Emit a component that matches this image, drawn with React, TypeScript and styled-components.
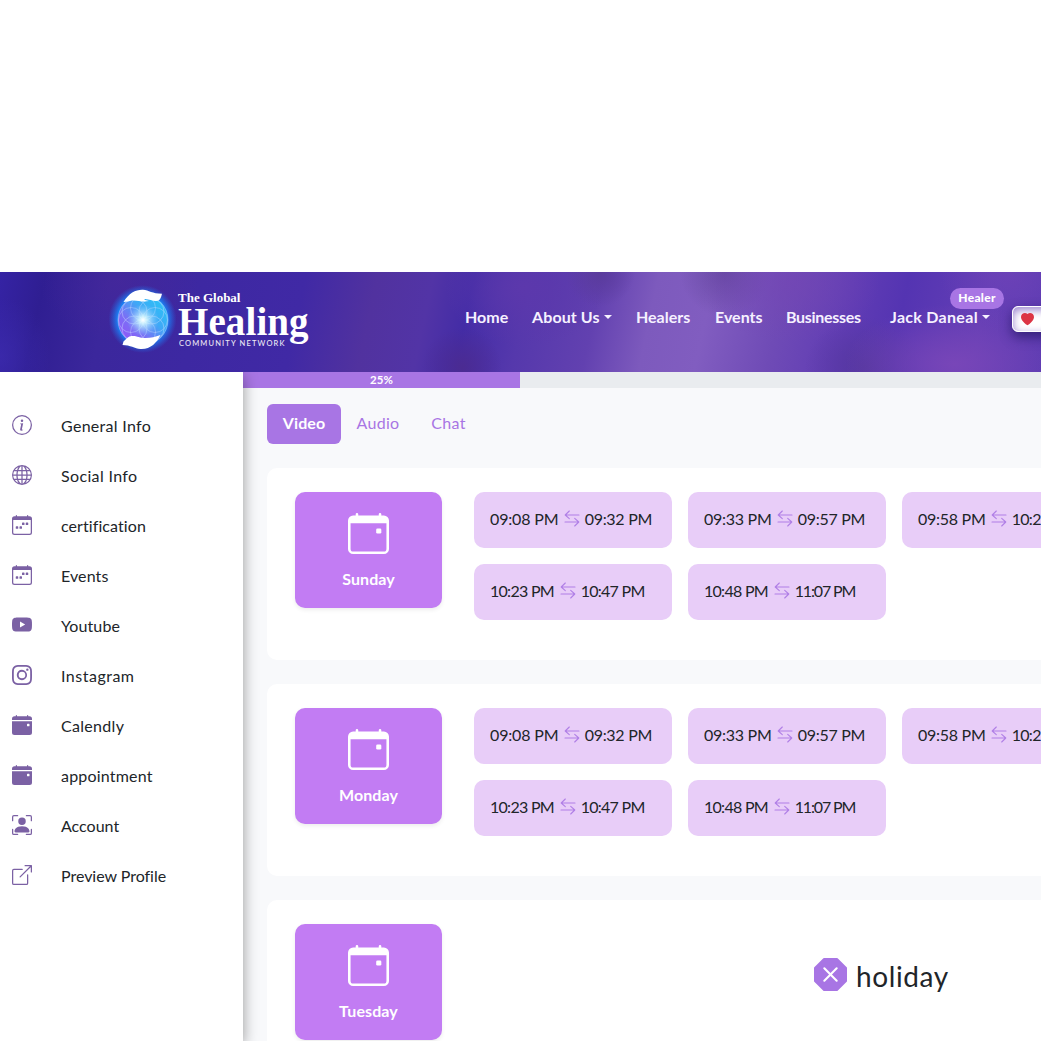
import React from "react";
import styled, { createGlobalStyle } from "styled-components";
import {
  BsInfoCircle, BsGlobe, BsCalendarWeek, BsYoutube, BsInstagram, BsCalendarEventFill,
  BsPersonBoundingBox, BsBoxArrowUpRight, BsCalendarEvent, BsXOctagonFill, BsHeartFill,
} from "react-icons/bs";

const Global = createGlobalStyle`
  *{box-sizing:border-box}
  body{margin:0;background:#fff;color:#212529;font:16px/24px Lato,"Liberation Sans",sans-serif;overflow:hidden}
`;
const Page = styled.div`height:1041px;overflow:hidden;padding-top:272px;display:flex;flex-direction:column;`;
const Header = styled.header`
  height:100px;flex:none;display:flex;align-items:flex-start;overflow:hidden;
  background:
    radial-gradient(ellipse 50px 60px at 0 85%,#3d2cb0aa,transparent),
    radial-gradient(ellipse 80px 60px at 120px 10px,#4a289a88,transparent),
    radial-gradient(ellipse 90px 60px at 790px 10px,#7446b4aa,transparent),
    radial-gradient(ellipse 110px 60px at 955px 92px,#7846b8,transparent),
    radial-gradient(ellipse 70px 60px at 1010px 0,#7043b8aa,transparent),
    radial-gradient(ellipse 45px 45px at 725px 0,#62449ccc,transparent),
    radial-gradient(ellipse 35px 35px at 600px 0,#5a3b9c,transparent),
    radial-gradient(ellipse 40px 40px at 462px 95px,#4b2b92,transparent),
    radial-gradient(ellipse 60px 50px at 865px 95px,#55379f,transparent),
    radial-gradient(ellipse 80px 60px at 525px 15px,#5c38ac,transparent),
    linear-gradient(102deg,#3523a4 0,#2f1e92 45px,#3b279c 110px,#3d28a2 200px,#4029a5 300px,#51329f 370px,#5234a6 425px,#432ca6 465px,#5538ac 520px,#6241b0 590px,#7d5abd 645px,#815dc0 700px,#6f4bb6 770px,#603cb4 840px,#5434b2 890px,#633eb5 970px,#5b3bb2 1041px);
`;
const Logo = styled.div`display:flex;margin:8px 0 0 105px;width:210px;height:80px;flex:none;`;
const Emblem = styled.svg`width:75px;height:75px;flex:none;`;
const LogoText = styled.div`display:flex;flex-direction:column;color:#fff;margin:10px 0 0 -2px;white-space:nowrap;font-family:"Liberation Serif",serif;font-weight:700;`;
const LogoTop = styled.span`font-size:13px;line-height:15px;`;
const LogoMain = styled.span`font-size:39px;line-height:34px;letter-spacing:.1px;`;
const LogoSub = styled.span`font:500 7.5px/10px Lato,sans-serif;letter-spacing:1.15px;padding-left:1px;opacity:.9;`;
const Nav = styled.nav`display:flex;margin:34px 0 0 150px;color:#f6f1ff;font-weight:700;white-space:nowrap;`;
const NavItem = styled.span<{ $w: number; $s?: number }>`width:${p => p.$w}px;height:24px;padding-bottom:2px;flex:none;display:flex;align-items:center;letter-spacing:${p => p.$s ?? 0}px;position:relative;`;
const Caret = styled.i`border:4.5px solid transparent;border-top-color:currentColor;border-bottom:0;margin-left:4px;`;
const Badge = styled.b`position:absolute;left:60px;top:-18px;width:54px;height:21px;border-radius:11px;background:#a875e4;color:#fff;font-size:12px;line-height:20px;text-align:center;letter-spacing:.3px;`;
const HeartButton = styled.div`width:60px;height:26px;flex:none;border:1px solid #fff;border-radius:6px;background:#fff;box-shadow:inset 0 3px 9px #9a83cf,0 5px 12px #2b1a6acc;color:#dc3545;padding:6px 8px;display:flex;svg{width:13px;height:13px;}`;
const Body = styled.div`display:flex;flex:1;min-height:0;`;
const Side = styled.aside`width:243px;flex:none;padding-top:28px;background:#fff;box-shadow:0 4px 14px #0006;position:relative;clip-path:inset(0 -30px 0 0);`;
const SideItem = styled.div<{ $s: number }>`height:50px;display:flex;align-items:center;padding-left:12px;letter-spacing:${p => p.$s}px;color:#212529;svg{width:20px;height:20px;margin-right:29px;color:#7b61a4;}span{padding-top:1px;}`;
const Main = styled.main`width:1108px;flex:none;background:#f8f9fb;`;
const Track = styled.div`height:16px;background:#e9ecef;`;
const Progress = styled.div`width:277px;height:16px;background:#a875e4;color:#fff;font-size:11.5px;line-height:15px;font-weight:700;text-align:center;`;
const Tabs = styled.div`display:flex;padding:16px 24px 24px;`;
const Tab = styled.div<{ $on?: boolean; $w: number }>`width:${p => p.$w}px;height:40px;border-radius:6px;line-height:37px;text-align:center;background:${p => p.$on ? "#a875e4" : "none"};color:${p => p.$on ? "#fff" : "#a875e4"};font-weight:${p => p.$on ? 700 : 400};letter-spacing:${p => p.$on ? 0.1 : 0.3}px;`;
const Days = styled.div`display:flex;flex-direction:column;gap:24px;padding-left:24px;`;
const Card = styled.section`height:192px;background:#fff;border-radius:10px;padding:24px 28px;display:flex;gap:32px;`;
const Day = styled.div`width:147px;height:116px;flex:none;border-radius:10px;background:#c27cf3;color:#fff;box-shadow:0 2px 4px #00000013;display:flex;flex-direction:column;align-items:center;padding-top:20.5px;font-weight:700;letter-spacing:.1px;svg{width:41px;height:41px;margin-bottom:13px;}`;
const Slots = styled.div`display:grid;grid-template-columns:repeat(3,198px);grid-auto-rows:56px;gap:16px;`;
const Slot = styled.div`border-radius:10px;background:#e8cdf8;padding:0 16px 2px;display:flex;align-items:center;white-space:nowrap;svg{width:16px;height:17px;flex:none;margin:0 5px 1px;}`;
const Time = styled.span<{ $s: number }>`letter-spacing:${p => p.$s}px;margin-right:${p => -p.$s}px;`;
const Holiday = styled.div`display:flex;align-items:center;height:100px;margin-left:340px;font-size:28px;letter-spacing:.6px;svg{width:33px;height:33px;color:#a875e4;margin-right:9px;}span{padding-top:3px;}`;

const Swap = () => (
  <svg viewBox="0 0 16 17" fill="none" stroke="#b07fe6" strokeWidth="1.1" strokeLinecap="round" strokeLinejoin="round">
    <path d="M15 5H1.200M5.300 1L1.200 5l4.100 3.700M1 12h13.800M10.700 8.300l4.100 3.700-4.100 4" />
  </svg>
);
const spacing = (t: string) => (t.startsWith("11") ? -1.15 : t.startsWith("10") ? -0.72 : t === "09:08" ? -0.15 : -0.28);
const slots = [["09:08", "09:32"], ["09:33", "09:57"], ["09:58", "10:22"], ["10:23", "10:47"], ["10:48", "11:07"]];
const menu: [string, React.ComponentType, number][] = [
  ["General Info", BsInfoCircle, .3], ["Social Info", BsGlobe, .35], ["certification", BsCalendarWeek, .08],
  ["Events", BsCalendarWeek, .1], ["Youtube", BsYoutube, .1], ["Instagram", BsInstagram, .5],
  ["Calendly", BsCalendarEventFill, .3], ["appointment", BsCalendarEventFill, .2],
  ["Account", BsPersonBoundingBox, 0], ["Preview Profile", BsBoxArrowUpRight, -.03],
];
const petals = [0, 45, 90, 135, 180, 225, 270, 315];

export default function App() {
  return (
    <Page>
      <Global />
      <Header>
        <Logo>
          <Emblem viewBox="0 0 75 75">
            <defs>
              <radialGradient id="halo"><stop offset=".7" stopColor="#168bff" /><stop offset="1" stopColor="#256be8" stopOpacity="0" /></radialGradient>
              <linearGradient id="orb" x1="0" y1="1" x2="1" y2="0"><stop stopColor="#9a48f8" /><stop offset=".35" stopColor="#7a70f5" /><stop offset=".6" stopColor="#3fa8f6" /><stop offset="1" stopColor="#22cdf6" /></linearGradient>
              <radialGradient id="shine"><stop stopColor="#fff" /><stop offset=".25" stopColor="#d7fbff" stopOpacity=".85" /><stop offset="1" stopColor="#8cf" stopOpacity="0" /></radialGradient>
            </defs>
            <circle cx="37.500" cy="39" r="34" fill="url(#halo)" />
            <circle cx="38" cy="40" r="25" fill="url(#orb)" />
            <g fill="none" stroke="#c8dcff" strokeOpacity=".6" strokeWidth=".7">
              {petals.map(a => <circle key={a} cx="38" cy="28" r="12.500" transform={`rotate(${a} 38 40)`} />)}
              <circle cx="38" cy="40" r="25" />
            </g>
            <circle cx="38" cy="40" r="16" fill="url(#shine)" />
            <path d="M18.500 22C24 13 31 9.500 38 9.800c6 .4 9 4 19 4-1 4-2 6.500-4 7-5 .8-9-2-13-1.800-2 .5 1 1.500 4 2-6 1.500-12-1-17-.5-3 .5-5 1.500-8.500 1.500ZM18.500 61.500c3-3 5-5.500 8-5.500 5-.5 8 2 14 2 6-.2 9.500-1 15-3-4 8-10 14.500-20 14-6-.5-10-4-18-4Z" fill="#fff" />
          </Emblem>
          <LogoText><LogoTop>The Global</LogoTop><LogoMain>Healing</LogoMain><LogoSub>COMMUNITY NETWORK</LogoSub></LogoText>
        </Logo>
        <Nav>
          <NavItem $w={67}>Home</NavItem><NavItem $w={104} $s={.1}>About Us<Caret /></NavItem><NavItem $w={79}>Healers</NavItem>
          <NavItem $w={71}>Events</NavItem><NavItem $w={104} $s={-.3}>Businesses</NavItem>
          <NavItem $w={122} $s={.3}>Jack Daneal<Caret /><Badge>Healer</Badge></NavItem>
          <HeartButton><BsHeartFill /></HeartButton>
        </Nav>
      </Header>
      <Body>
        <Side>{menu.map(([t, Icon, s]) => <SideItem key={t} $s={s}><Icon /><span>{t}</span></SideItem>)}</Side>
        <Main>
          <Track><Progress>25%</Progress></Track>
          <Tabs><Tab $on $w={74}>Video</Tab><Tab $w={74}>Audio</Tab><Tab $w={67}>Chat</Tab></Tabs>
          <Days>
            {["Sunday", "Monday", "Tuesday"].map(d => (
              <Card key={d}>
                <Day><BsCalendarEvent />{d}</Day>
                {d === "Tuesday" ? <Holiday><BsXOctagonFill /><span>holiday</span></Holiday> : (
                  <Slots>{slots.map(([a, b]) => (
                    <Slot key={a}><Time $s={spacing(a)}>{a} PM</Time><Swap /><Time $s={spacing(b)}>{b} PM</Time></Slot>
                  ))}</Slots>
                )}
              </Card>
            ))}
          </Days>
        </Main>
      </Body>
    </Page>
  );
}
